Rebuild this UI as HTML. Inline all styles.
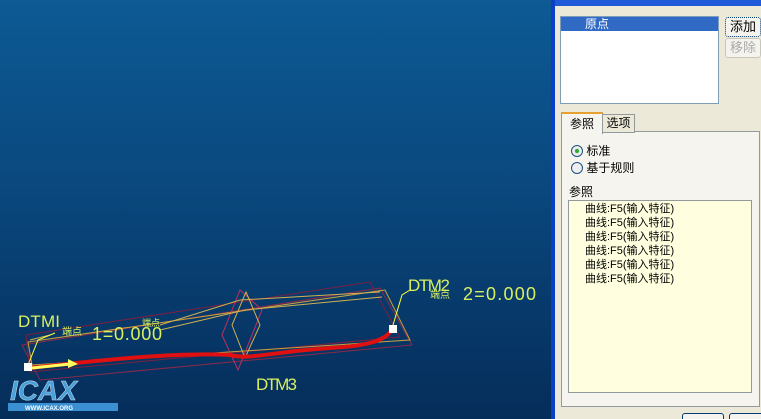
<!DOCTYPE html><html><head><meta charset="utf-8"><style>
html,body{margin:0;width:761px;height:419px;overflow:hidden}
body{position:relative;font-family:"Liberation Sans","Noto Sans CJK SC",sans-serif;font-size:12px}
.bg{position:absolute;left:0;top:0;width:553px;height:419px;background:linear-gradient(#0d5a94,#0a4a80 40%,#052d5a)}
.dlg{position:absolute;left:551px;top:0;width:210px;height:419px;background:#ece9d8;border-left:4px solid #0a40c8;box-sizing:border-box}
.ab{position:absolute}
.btn{position:absolute;background:#f4f3ee;border:1px solid #003c74;border-radius:3px;text-align:center;font-size:13px;line-height:17px}
</style></head><body>
<div class="bg"></div>
<svg class="ab" style="left:0;top:0" width="553" height="419">
<g fill="none" stroke-width="1">
<polygon points="22,345 380,288 412,345 40,380" stroke="#8a2a4a"/>
<polygon points="26,335 370,282 400,337 30,372" stroke="#7a2040"/>
<polygon points="28,342 385,290 410,340 32,365" stroke="#c8a040"/>
<polygon points="240,290 262,310 238,370 222,335" stroke="#c03060"/>
<polygon points="246,292 260,325 245,358 232,325" stroke="#d0b050"/>
<path d="M30,340 L50,335 M160,325 L240,300 L380,292" stroke="#d0b050"/>
<path d="M160,330 L245,310 L382,297" stroke="#d0b050"/>
</g>
<path d="M30,368 C100,360 180,352 230,355 C250,360 270,352 330,348 C370,346 385,340 392,330" stroke="#e01010" stroke-width="4" fill="none"/>
<path d="M32,368 L70,364" stroke="#ffff60" stroke-width="3"/><polygon points="68,359 78,364 68,368" fill="#ffff60"/>
<path d="M28,365 L38,340 L55,333 M393,325 L402,295 L410,290" stroke="#ffff40" fill="none"/>
<rect x="24" y="363" width="8" height="8" fill="#fff"/><rect x="389" y="325" width="8" height="8" fill="#fff"/>
<g fill="#d8f060" font-family="Liberation Sans,sans-serif">
<text x="18" y="327" font-size="17" textLength="42">DTMI</text>
<text x="256" y="390" font-size="17" textLength="41">DTM3</text>
<text x="408" y="291" font-size="17" textLength="42">DTM2</text>
<text x="92" y="340" font-size="18" textLength="70">1=0.000</text>
<text x="463" y="300" font-size="18" textLength="73">2=0.000</text>
<text x="62" y="335" font-size="10" font-family="Noto Sans CJK SC">端点</text>
<text x="430" y="298" font-size="10" font-family="Noto Sans CJK SC">端点</text>
<text x="142" y="326" font-size="9" font-family="Noto Sans CJK SC">端点</text>
</g>
<text x="10" y="400" fill="#4aa0d8" font-size="28" font-style="italic" font-family="Liberation Sans" font-weight="bold" stroke="#cde" stroke-width=".5">ICAX</text>
<rect x="8" y="403" width="110" height="8" fill="#3a90d0"/>
<text x="25" y="410" fill="#fff" font-size="6" font-weight="bold">WWW.ICAX.ORG</text>
</svg>
<div class="dlg">
<div class="ab" style="left:0;top:0;width:206px;height:6px;background:#1e5ad8"></div>
<div class="ab" style="left:5px;top:16px;width:157px;height:86px;background:#fff;border:1px solid #7f9db9"></div>
<div class="ab" style="left:6px;top:17px;width:157px;height:14px;background:#316ac5;color:#fff;line-height:14px;padding-left:24px;box-sizing:border-box">原点</div>
<div class="btn" style="left:170px;top:17px;width:34px;height:18px;border-style:dotted">添加</div>
<div class="btn" style="left:170px;top:38px;width:34px;height:18px;color:#aaa;border-color:#c9c7ba">移除</div>
<div class="ab" style="left:6px;top:131px;width:197px;height:274px;border:1px solid #919b9c;background:#f5f4ee"></div>
<div class="ab" style="left:6px;top:112px;width:40px;height:20px;background:#f5f4ee;border:1px solid #919b9c;border-bottom:none;border-top:2px solid #e8a030;text-align:center;line-height:20px">参照</div>
<div class="ab" style="left:47px;top:114px;width:31px;height:17px;background:#ece9d8;border:1px solid #919b9c;text-align:center;line-height:17px">选项</div>
<div class="ab" style="left:16px;top:143px;line-height:17px">
<div><span style="display:inline-block;width:10px;height:10px;border:1px solid #1c5180;border-radius:50%;background:radial-gradient(#3a3 25%,#eee 35%);vertical-align:-2px"></span> 标准</div>
<div><span style="display:inline-block;width:10px;height:10px;border:1px solid #1c5180;border-radius:50%;background:#eee;vertical-align:-2px"></span> 基于规则</div></div>
<div class="ab" style="left:14px;top:183px">参照</div>
<div class="ab" style="left:13px;top:200px;width:184px;height:193px;background:#ffffe0;border:1px solid #919b9c;padding:1px 0 0 16px;box-sizing:border-box;line-height:14px;font-size:11px">曲线:F5(输入特征)<br>曲线:F5(输入特征)<br>曲线:F5(输入特征)<br>曲线:F5(输入特征)<br>曲线:F5(输入特征)<br>曲线:F5(输入特征)</div>
<div class="btn" style="left:127px;top:413px;width:40px;height:14px"></div>
<div class="btn" style="left:174px;top:413px;width:36px;height:14px"></div>
</div>
</body></html>
